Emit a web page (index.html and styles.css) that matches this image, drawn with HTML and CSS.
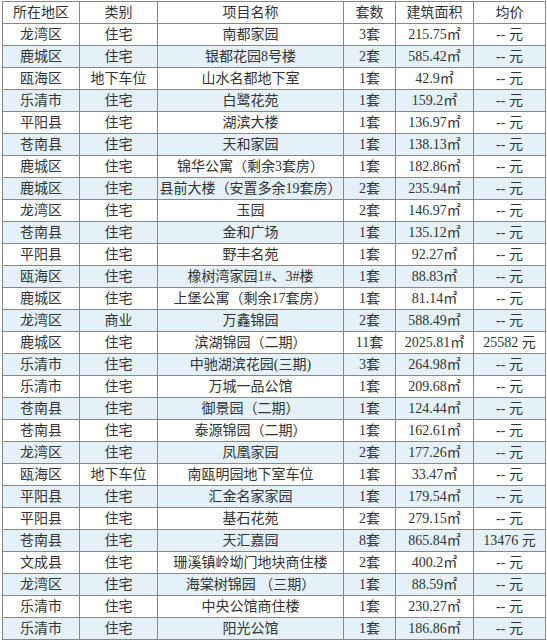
FILE: index.html
```html
<!DOCTYPE html>
<html lang="zh-CN">
<head>
<meta charset="utf-8">
<title>项目列表</title>
<link rel="stylesheet" href="styles.css">
</head>
<body>
<table class="grid">
  <colgroup>
    <col class="c1"><col class="c2"><col class="c3"><col class="c4"><col class="c5"><col class="c6">
  </colgroup>
  <thead>
    <tr><th>所在地区</th><th>类别</th><th>项目名称</th><th>套数</th><th>建筑面积</th><th>均价</th></tr>
  </thead>
  <tbody>
    <tr><td>龙湾区</td><td>住宅</td><td>南都家园</td><td>3套</td><td>215.75㎡</td><td>-- 元</td></tr>
    <tr class="alt"><td>鹿城区</td><td>住宅</td><td>银都花园8号楼</td><td>2套</td><td>585.42㎡</td><td>-- 元</td></tr>
    <tr><td>瓯海区</td><td>地下车位</td><td>山水名都地下室</td><td>1套</td><td>42.9㎡</td><td>-- 元</td></tr>
    <tr class="alt"><td>乐清市</td><td>住宅</td><td>白鹭花苑</td><td>1套</td><td>159.2㎡</td><td>-- 元</td></tr>
    <tr><td>平阳县</td><td>住宅</td><td>湖滨大楼</td><td>1套</td><td>136.97㎡</td><td>-- 元</td></tr>
    <tr class="alt"><td>苍南县</td><td>住宅</td><td>天和家园</td><td>1套</td><td>138.13㎡</td><td>-- 元</td></tr>
    <tr><td>鹿城区</td><td>住宅</td><td>锦华公寓（剩余3套房）</td><td>1套</td><td>182.86㎡</td><td>-- 元</td></tr>
    <tr class="alt"><td>鹿城区</td><td>住宅</td><td>县前大楼（安置多余19套房）</td><td>2套</td><td>235.94㎡</td><td>-- 元</td></tr>
    <tr><td>龙湾区</td><td>住宅</td><td>玉园</td><td>2套</td><td>146.97㎡</td><td>-- 元</td></tr>
    <tr class="alt"><td>苍南县</td><td>住宅</td><td>金和广场</td><td>1套</td><td>135.12㎡</td><td>-- 元</td></tr>
    <tr><td>平阳县</td><td>住宅</td><td>野丰名苑</td><td>1套</td><td>92.27㎡</td><td>-- 元</td></tr>
    <tr class="alt"><td>瓯海区</td><td>住宅</td><td>橡树湾家园1#、3#楼</td><td>1套</td><td>88.83㎡</td><td>-- 元</td></tr>
    <tr><td>鹿城区</td><td>住宅</td><td>上堡公寓（剩余17套房）</td><td>1套</td><td>81.14㎡</td><td>-- 元</td></tr>
    <tr class="alt"><td>龙湾区</td><td>商业</td><td>万鑫锦园</td><td>2套</td><td>588.49㎡</td><td>-- 元</td></tr>
    <tr><td>鹿城区</td><td>住宅</td><td>滨湖锦园（二期）</td><td>11套</td><td>2025.81㎡</td><td>25582 元</td></tr>
    <tr class="alt"><td>乐清市</td><td>住宅</td><td>中驰湖滨花园(三期)</td><td>3套</td><td>264.98㎡</td><td>-- 元</td></tr>
    <tr><td>乐清市</td><td>住宅</td><td>万城一品公馆</td><td>1套</td><td>209.68㎡</td><td>-- 元</td></tr>
    <tr class="alt"><td>苍南县</td><td>住宅</td><td>御景园（二期）</td><td>1套</td><td>124.44㎡</td><td>-- 元</td></tr>
    <tr><td>苍南县</td><td>住宅</td><td>泰源锦园（二期）</td><td>1套</td><td>162.61㎡</td><td>-- 元</td></tr>
    <tr class="alt"><td>龙湾区</td><td>住宅</td><td>凤凰家园</td><td>2套</td><td>177.26㎡</td><td>-- 元</td></tr>
    <tr><td>瓯海区</td><td>地下车位</td><td>南瓯明园地下室车位</td><td>1套</td><td>33.47㎡</td><td>-- 元</td></tr>
    <tr class="alt"><td>平阳县</td><td>住宅</td><td>汇金名家家园</td><td>1套</td><td>179.54㎡</td><td>-- 元</td></tr>
    <tr><td>平阳县</td><td>住宅</td><td>基石花苑</td><td>2套</td><td>279.15㎡</td><td>-- 元</td></tr>
    <tr class="alt"><td>苍南县</td><td>住宅</td><td>天汇嘉园</td><td>8套</td><td>865.84㎡</td><td>13476 元</td></tr>
    <tr><td>文成县</td><td>住宅</td><td>珊溪镇岭坳门地块商住楼</td><td>2套</td><td>400.2㎡</td><td>-- 元</td></tr>
    <tr class="alt"><td>龙湾区</td><td>住宅</td><td>海棠树锦园 （三期）</td><td>1套</td><td>88.59㎡</td><td>-- 元</td></tr>
    <tr><td>乐清市</td><td>住宅</td><td>中央公馆商住楼</td><td>1套</td><td>230.27㎡</td><td>-- 元</td></tr>
    <tr class="alt"><td>乐清市</td><td>住宅</td><td>阳光公馆</td><td>1套</td><td>186.86㎡</td><td>-- 元</td></tr>
  </tbody>
</table>
</body>
</html>
```

FILE: styles.css
```css
html, body {
  margin: 0;
  padding: 0;
  background: #ffffff;
}

.grid {
  margin: 1px 0 0 2px;
  border-collapse: collapse;
  table-layout: fixed;
  width: 544px;
  font-family: "Liberation Serif", "Noto Sans CJK SC", serif;
  font-size: 14px;
  color: #333333;
}

.c1 { width: 77px; }
.c2 { width: 78px; }
.c3 { width: 186px; }
.c4 { width: 52px; }
.c5 { width: 78px; }
.c6 { width: 72px; }

.grid th,
.grid td {
  border: 1px solid #888888;
  padding: 0;
  height: 21px;
  line-height: 21px;
  text-align: center;
  white-space: nowrap;
  overflow: hidden;
  font-weight: normal;
}

.grid tr.alt td {
  background: #e4f1f9;
}
```
